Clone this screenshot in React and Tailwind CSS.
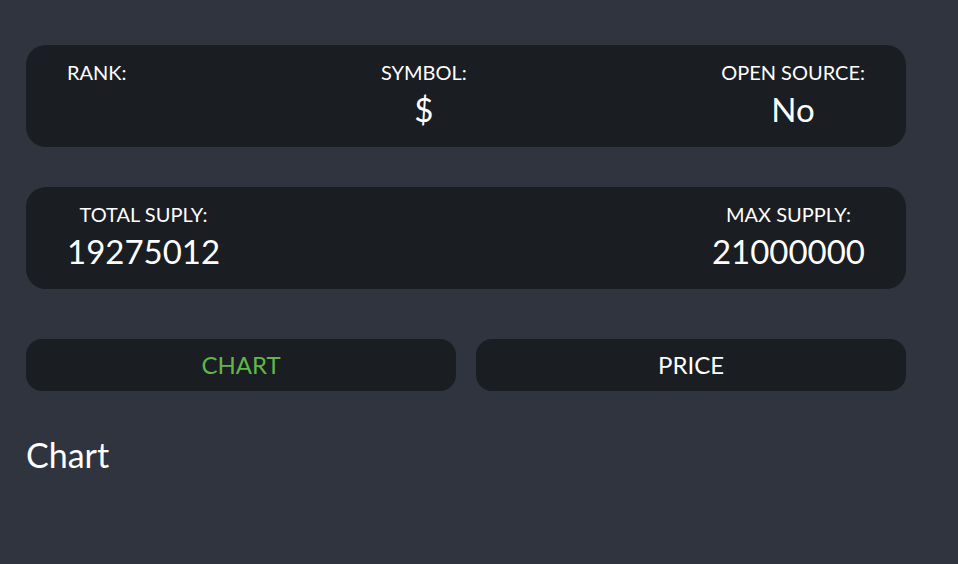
import { useState } from "react";

const lato = { fontFamily: "Lato, 'Noto Sans', sans-serif" };

function Stat({ label, value }) {
  return (
    <div className="flex flex-col items-center text-center">
      <span className="text-[20px] leading-[24px] text-white">{label}</span>
      <span className="mt-[5px] text-[33px] leading-[40px] text-white">{value}</span>
    </div>
  );
}

export default function App() {
  const [tab, setTab] = useState("chart");

  return (
    <div className="min-h-[564px] w-full bg-[#2f343e]" style={lato}>
      <div className="w-[880px] ml-[26px] pt-[45px]">
        <div className="h-[102px] rounded-[20px] bg-[#1a1d22] px-[41px] pt-[15px] flex justify-between items-start">
          <Stat label="RANK:" value="" />
          <Stat label="SYMBOL:" value="$" />
          <Stat label="OPEN SOURCE:" value="No" />
        </div>

        <div className="mt-[40px] h-[102px] rounded-[20px] bg-[#1a1d22] px-[41px] pt-[15px] flex justify-between items-start">
          <Stat label="TOTAL SUPLY:" value="19275012" />
          <Stat label="MAX SUPPLY:" value="21000000" />
        </div>

        <div className="mt-[50px] grid grid-cols-2 gap-[20px]">
          <button
            onClick={() => setTab("chart")}
            className={`h-[52px] rounded-[16px] bg-[#1a1d22] text-[24px] ${tab === "chart" ? "text-[#62b547]" : "text-white"}`}
          >
            CHART
          </button>
          <button
            onClick={() => setTab("price")}
            className={`h-[52px] rounded-[16px] bg-[#1a1d22] text-[24px] ${tab === "price" ? "text-[#62b547]" : "text-white"}`}
          >
            PRICE
          </button>
        </div>

        <div className="mt-[45px] text-[34px] leading-[38px] text-white">
          {tab === "chart" ? "Chart" : "Price"}
        </div>
      </div>
    </div>
  );
}
